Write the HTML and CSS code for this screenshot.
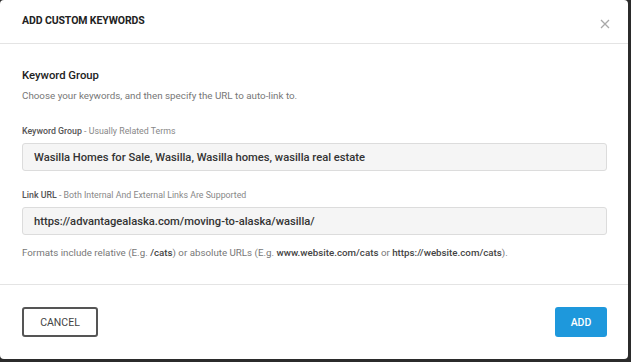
FILE: index.html
```html
<!DOCTYPE html>
<html lang="en">
<head>
    <meta charset="UTF-8">
    <meta name="viewport" content="width=device-width, initial-scale=1.0">
    <title>Add Custom Keywords</title>
    <link rel="stylesheet" href="styles.css">
</head>
<body>
    <div class="modal">
        <div class="modal-header">
            <h2 class="modal-title">ADD CUSTOM KEYWORDS</h2>
            <button type="button" class="close-btn" aria-label="Close">
                <svg width="10" height="10" viewBox="0 0 10 10">
                    <path d="M1 1 L9 9 M9 1 L1 9" stroke="#a9a9a9" stroke-width="1.3" fill="none"/>
                </svg>
            </button>
        </div>

        <div class="modal-body">
            <h3 class="section-title">Keyword Group</h3>
            <p class="section-desc">Choose your keywords, and then specify the URL to auto-link to.</p>

            <label class="field-label" for="keywords"><b>Keyword Group</b> - Usually Related Terms</label>
            <input class="field-input" type="text" id="keywords" value="Wasilla Homes for Sale, Wasilla, Wasilla homes, wasilla real estate">

            <label class="field-label second" for="linkUrl"><b>Link URL</b> - Both Internal And External Links Are Supported</label>
            <input class="field-input" type="text" id="linkUrl" value="https://advantagealaska.com/moving-to-alaska/wasilla/">

            <p class="help-text">Formats include relative (E.g. <b>/cats</b>) or absolute URLs (E.g. <b>www.website.com/cats</b> or <b>https://website.com/cats</b>).</p>
        </div>

        <div class="modal-footer">
            <button type="button" class="btn btn-cancel">CANCEL</button>
            <button type="button" class="btn btn-add">ADD</button>
        </div>
    </div>
</body>
</html>
```

FILE: styles.css
```css
body {
    font-family: Roboto, "Liberation Sans", Arial, sans-serif;
    margin: 0;
    padding: 0;
    background-color: #2b2b2b;
    width: 631px;
    height: 362px;
    overflow: hidden;
}

.modal {
    width: 628px;
    height: 359px;
    background-color: #fff;
    border-radius: 4px;
    display: flex;
    flex-direction: column;
}

.modal-header {
    height: 44px;
    box-sizing: border-box;
    padding: 15px 18px 0 22px;
    border-bottom: 1px solid #e4e4e4;
    display: flex;
    justify-content: space-between;
    align-items: flex-start;
}

.modal-title {
    margin: 0;
    font-size: 10.5px;
    line-height: 12px;
    font-weight: 700;
    color: #222;
    letter-spacing: -0.1px;
}

.close-btn {
    background: none;
    border: none;
    padding: 0;
    margin: 4px 0 0;
    width: 10px;
    height: 10px;
    cursor: pointer;
    display: flex;
}

.modal-body {
    flex: 1;
    padding: 24px 21px 0 22px;
    display: flex;
    flex-direction: column;
}

.section-title {
    margin: 0;
    font-size: 11.3px;
    line-height: 16px;
    font-weight: 500;
    color: #222;
}

.section-desc {
    margin: 5px 0 0;
    font-size: 9.8px;
    line-height: 14px;
    color: #777;
}

.field-label {
    margin-top: 22px;
    font-size: 8.8px;
    line-height: 12px;
    color: #888;
}

.field-label b {
    font-weight: 500;
    color: #555;
}

.field-label.second {
    margin-top: 18px;
}

.field-input {
    margin-top: 6px;
    height: 28px;
    box-sizing: border-box;
    padding: 0 11px;
    border: 1px solid #dcdcdc;
    border-radius: 3px;
    background-color: #f5f5f5;
    font-family: inherit;
    font-size: 11.2px;
    font-weight: 500;
    color: #333;
    outline: none;
}

.help-text {
    margin: 11px 0 0;
    font-size: 9.75px;
    line-height: 14px;
    color: #777;
}

.help-text b {
    font-weight: 500;
    color: #444;
}

.modal-footer {
    border-top: 1px solid #e4e4e4;
    padding: 22px 21px 0 22px;
    height: 75px;
    box-sizing: border-box;
    display: flex;
    justify-content: space-between;
    align-items: flex-start;
}

.btn {
    height: 30px;
    box-sizing: border-box;
    border-radius: 3px;
    font-family: inherit;
    font-size: 10.5px;
    cursor: pointer;
}

.btn-cancel {
    width: 76px;
    background-color: #fff;
    border: 2px solid #555;
    color: #444;
}

.btn-add {
    width: 52px;
    background-color: #1e98dc;
    border: none;
    color: #fff;
    font-weight: 500;
}
```
